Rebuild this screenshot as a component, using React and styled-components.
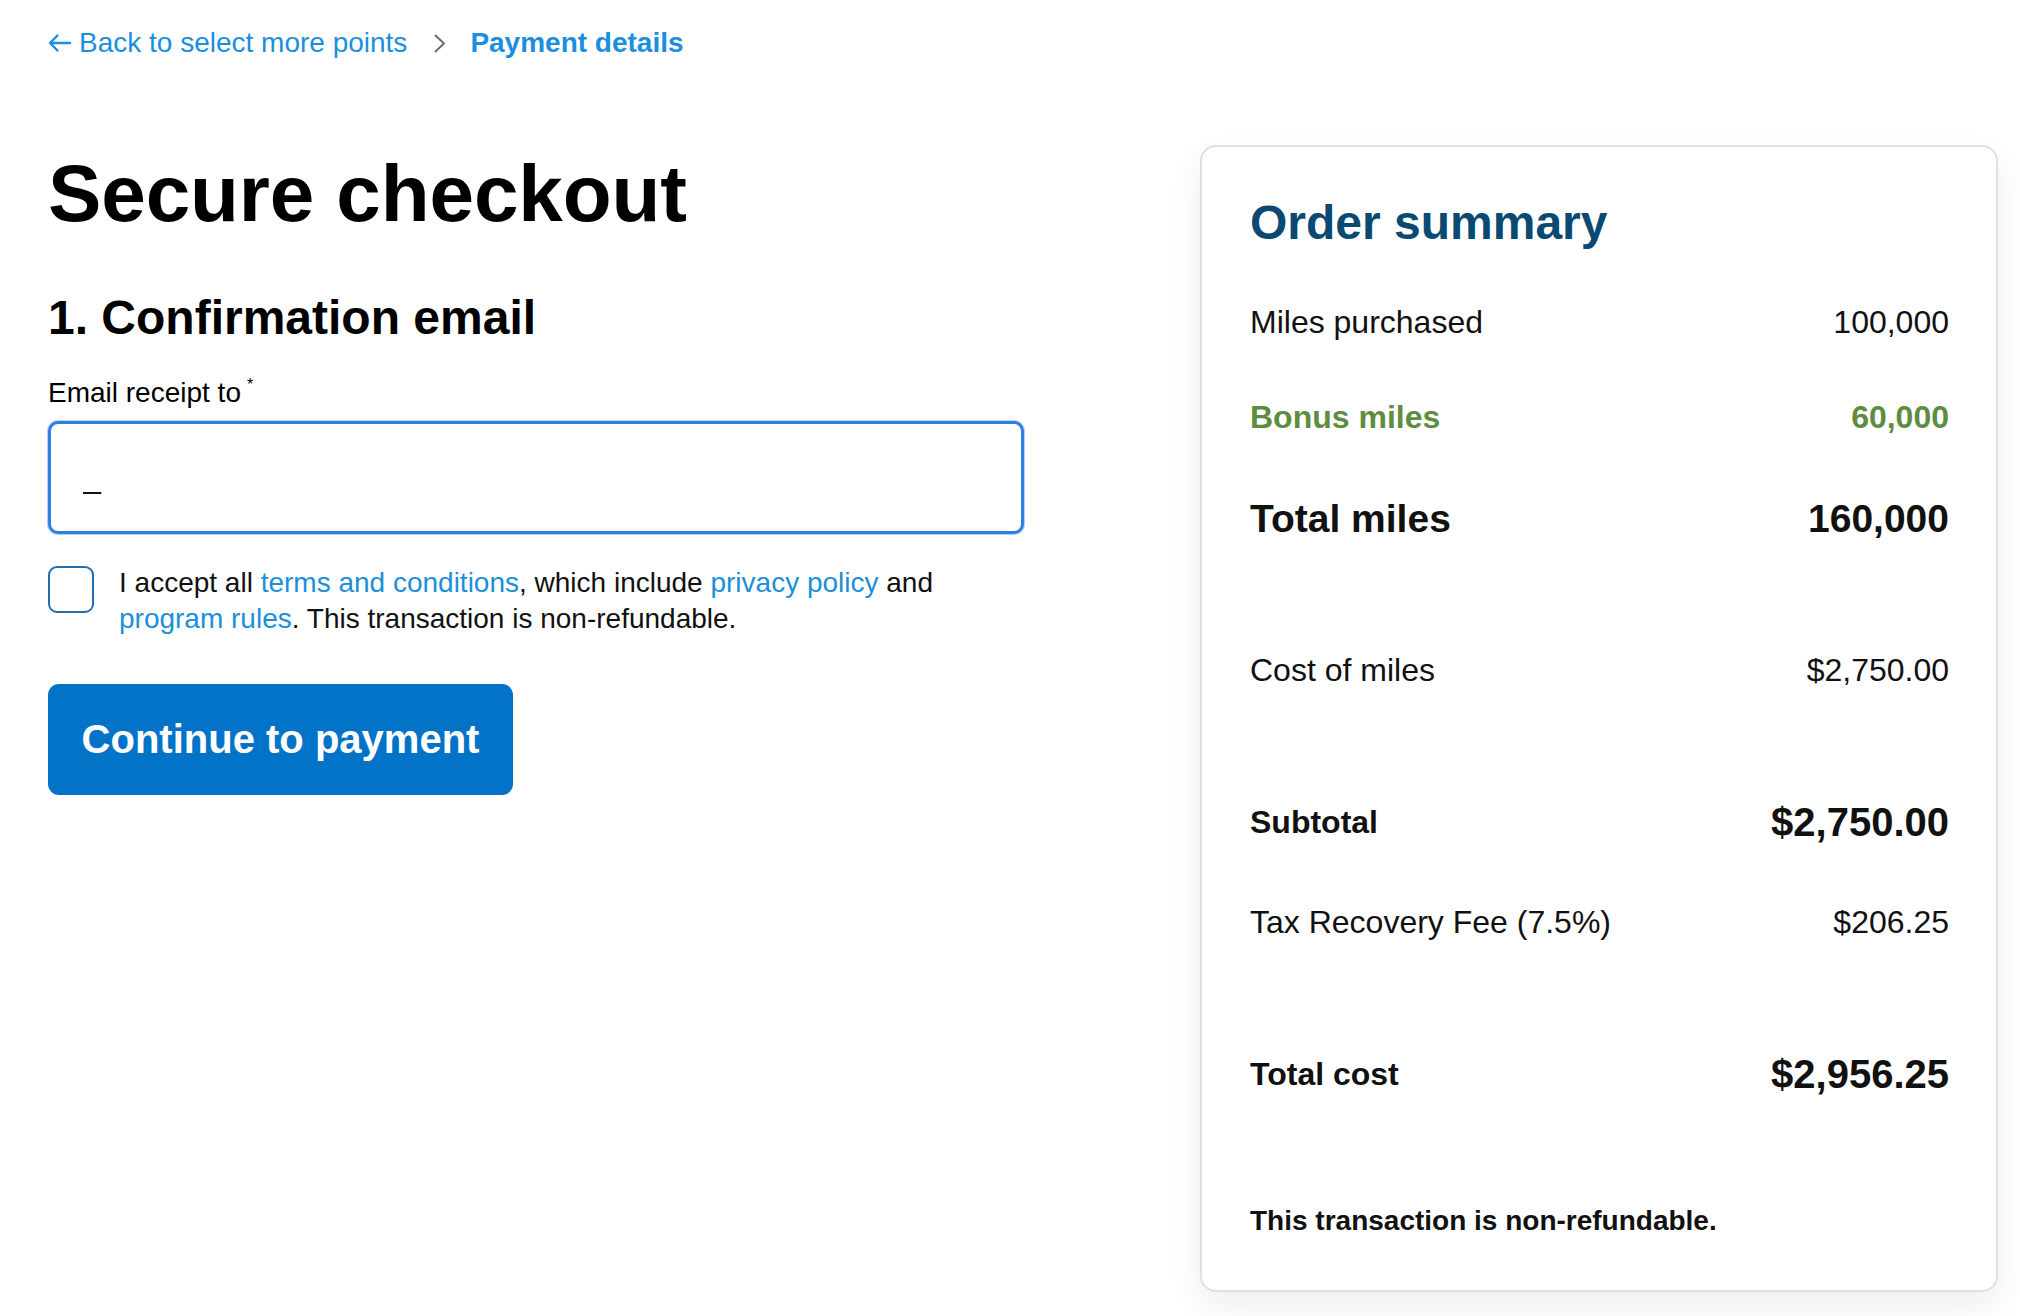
import React from "react";
import styled, { createGlobalStyle } from "styled-components";

const GlobalStyle = createGlobalStyle`
  html, body {
    margin: 0;
    padding: 0;
    background: #ffffff;
  }
  body {
    font-family: "Liberation Sans", Arial, Helvetica, sans-serif;
    color: #000000;
  }
  * { box-sizing: border-box; }
`;

const Page = styled.div`
  display: flex;
  justify-content: space-between;
  align-items: flex-start;
  padding: 27px 22px 0 48px;
  width: 2020px;
  min-height: 1316px;
`;

const Main = styled.div`
  display: flex;
  flex-direction: column;
  width: 976px;
`;

const Breadcrumbs = styled.nav`
  display: flex;
  align-items: center;
  height: 32px;
  font-size: 28px;
  line-height: 32px;
`;

const BackLink = styled.a`
  display: flex;
  align-items: center;
  gap: 8px;
  color: #1c8ede;
  text-decoration: none;
`;

const Chevron = styled.span`
  display: flex;
  align-items: center;
  margin: 0 24px 0 27px;
`;

const Current = styled.span`
  color: #1c8ede;
  font-weight: 700;
`;

const Title = styled.h1`
  margin: 95px 0 0;
  font-size: 80px;
  line-height: 80px;
  font-weight: 700;
  letter-spacing: -0.1px;
`;

const SectionTitle = styled.h2`
  margin: 56px 0 0;
  font-size: 48px;
  line-height: 56px;
  font-weight: 700;
`;

const Label = styled.label`
  margin-top: 23px;
  font-size: 28px;
  line-height: 32px;
`;

const Req = styled.sup`
  font-size: 16px;
  margin-left: 6px;
  vertical-align: 12px;
`;

const EmailInput = styled.input`
  margin-top: 12px;
  width: 976px;
  height: 113px;
  border: 3px solid #2f7fe0;
  border-radius: 10px;
  box-shadow: 0 0 0 1px rgba(47, 127, 224, 0.35);
  padding: 0 0 0 32px;
  font-family: "Liberation Sans", Arial, sans-serif;
  font-size: 32px;
  color: #111;
  outline: none;
  background: #fff;
`;

const ConsentRow = styled.div`
  display: flex;
  align-items: flex-start;
  gap: 25px;
  margin-top: 32px;
`;

const Box = styled.span`
  flex: none;
  width: 46px;
  height: 47px;
  border: 2px solid #1f6eb0;
  border-radius: 9px;
  background: #fff;
`;

const ConsentText = styled.p`
  margin: -1px 0 0;
  font-size: 28px;
  line-height: 36px;
  color: #111;
`;

const TextLink = styled.a`
  color: #1d8fd8;
  text-decoration: none;
`;

const PrimaryButton = styled.button`
  align-self: flex-start;
  margin-top: 47px;
  width: 465px;
  height: 111px;
  border: none;
  border-radius: 11px;
  background: #0373c8;
  color: #ffffff;
  font-family: "Liberation Sans", Arial, sans-serif;
  font-size: 40px;
  font-weight: 700;
  cursor: pointer;
`;

const Card = styled.aside`
  margin-top: 118px;
  width: 798px;
  display: flex;
  flex-direction: column;
  padding: 48px 47px 49px 48px;
  border: 2px solid #dde1e6;
  border-radius: 16px;
  background: #fff;
  box-shadow: 0 14px 34px rgba(0, 0, 0, 0.07);
`;

const CardTitle = styled.h2`
  margin: 0;
  font-size: 48px;
  line-height: 56px;
  font-weight: 700;
  color: #0a4a72;
`;

const Row = styled.div`
  display: flex;
  justify-content: space-between;
  align-items: center;
  margin-top: ${(p) => p.$gap}px;
  height: 40px;
  line-height: 40px;
  font-size: 32px;
  font-weight: ${(p) => (p.$bold ? 700 : 400)};
  color: ${(p) => p.$color || "#111"};
`;

const Value = styled.span`
  font-size: ${(p) => p.$size || 32}px;
`;

const RowLabel = styled.span`
  font-size: ${(p) => p.$size || 32}px;
`;

const Note = styled.p`
  margin: 107px 0 0;
  font-size: 28px;
  line-height: 40px;
  font-weight: 700;
  color: #111;
`;

const ArrowLeft = () => (
  <svg width="23" height="18" viewBox="0 0 23 18" fill="none">
    <path d="M22 9H2.5M9.5 1.5L2 9l7.5 7.5" stroke="#1c8ede" strokeWidth="2.4" strokeLinecap="round" strokeLinejoin="round" />
  </svg>
);

const ChevronRight = () => (
  <svg width="12" height="19" viewBox="0 0 12 19" fill="none">
    <path d="M1.5 1.5L10 9.5 1.5 17.5" stroke="#6f6f6f" strokeWidth="2" strokeLinecap="round" strokeLinejoin="round" />
  </svg>
);

const rows = [
  { label: "Miles purchased", value: "100,000", gap: 51 },
  { label: "Bonus miles", value: "60,000", gap: 55, bold: true, color: "#5e8d3f" },
  { label: "Total miles", value: "160,000", gap: 62, bold: true, labelSize: 39, valueSize: 39 },
  { label: "Cost of miles", value: "$2,750.00", gap: 111 },
  { label: "Subtotal", value: "$2,750.00", gap: 112, bold: true, valueSize: 40 },
  { label: "Tax Recovery Fee (7.5%)", value: "$206.25", gap: 60 },
  { label: "Total cost", value: "$2,956.25", gap: 112, bold: true, valueSize: 40 },
];

export default function App() {
  return (
    <>
      <GlobalStyle />
      <Page>
        <Main>
          <Breadcrumbs>
            <BackLink href="#">
              <ArrowLeft />
              Back to select more points
            </BackLink>
            <Chevron>
              <ChevronRight />
            </Chevron>
            <Current>Payment details</Current>
          </Breadcrumbs>
          <Title>Secure checkout</Title>
          <SectionTitle>1. Confirmation email</SectionTitle>
          <Label htmlFor="email">
            Email receipt to<Req>*</Req>
          </Label>
          <EmailInput id="email" defaultValue="_" />
          <ConsentRow>
            <Box />
            <ConsentText>
              I accept all <TextLink href="#">terms and conditions</TextLink>, which include{" "}
              <TextLink href="#">privacy policy</TextLink> and{" "}
              <TextLink href="#">program rules</TextLink>. This transaction is non-refundable.
            </ConsentText>
          </ConsentRow>
          <PrimaryButton>Continue to payment</PrimaryButton>
        </Main>
        <Card>
          <CardTitle>Order summary</CardTitle>
          {rows.map((r) => (
            <Row key={r.label} $gap={r.gap} $bold={r.bold} $color={r.color}>
              <RowLabel $size={r.labelSize}>{r.label}</RowLabel>
              <Value $size={r.valueSize}>{r.value}</Value>
            </Row>
          ))}
          <Note>This transaction is non-refundable.</Note>
        </Card>
      </Page>
    </>
  );
}
